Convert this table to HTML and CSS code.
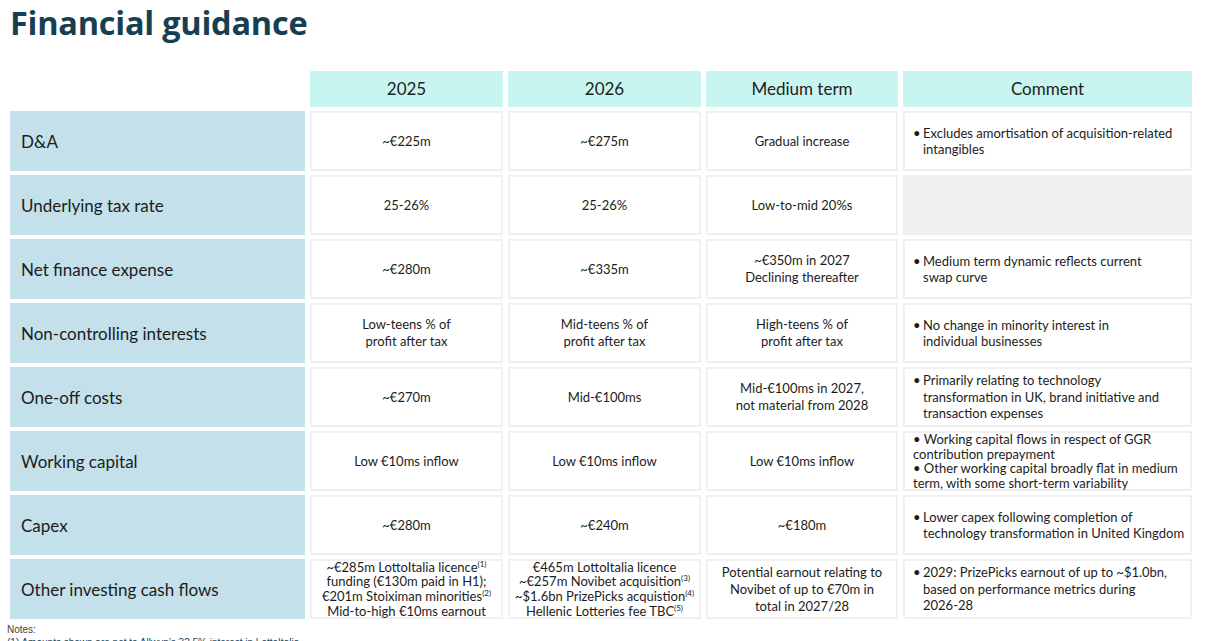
FILE: index.html
```html
<!DOCTYPE html>
<html lang="en">
<head>
<meta charset="utf-8">
<title>Financial guidance</title>
<link rel="stylesheet" href="styles.css">
</head>
<body>
<div class="page">
  <h1 class="title">Financial guidance</h1>
  <div class="grid">
    <div class="corner"></div>
    <div class="head">2025</div>
    <div class="head">2026</div>
    <div class="head">Medium term</div>
    <div class="head">Comment</div>

    <div class="label">D&amp;A</div>
    <div class="cell"><div class="txt">~€225m</div></div>
    <div class="cell"><div class="txt">~€275m</div></div>
    <div class="cell"><div class="txt">Gradual increase</div></div>
    <div class="cell comment"><div class="bul"><span class="dot">•</span><span>Excludes amortisation of acquisition-related<br>intangibles</span></div></div>

    <div class="label">Underlying tax rate</div>
    <div class="cell"><div class="txt">25-26%</div></div>
    <div class="cell"><div class="txt">25-26%</div></div>
    <div class="cell"><div class="txt">Low-to-mid 20%s</div></div>
    <div class="cell empty"></div>

    <div class="label">Net finance expense</div>
    <div class="cell"><div class="txt">~€280m</div></div>
    <div class="cell"><div class="txt">~€335m</div></div>
    <div class="cell"><div class="txt">~€350m in 2027<br>Declining thereafter</div></div>
    <div class="cell comment"><div class="bul"><span class="dot">•</span><span>Medium term dynamic reflects current<br>swap curve</span></div></div>

    <div class="label">Non-controlling interests</div>
    <div class="cell"><div class="txt">Low-teens % of<br>profit after tax</div></div>
    <div class="cell"><div class="txt">Mid-teens % of<br>profit after tax</div></div>
    <div class="cell"><div class="txt">High-teens % of<br>profit after tax</div></div>
    <div class="cell comment"><div class="bul"><span class="dot">•</span><span>No change in minority interest in<br>individual businesses</span></div></div>

    <div class="label">One-off costs</div>
    <div class="cell"><div class="txt">~€270m</div></div>
    <div class="cell"><div class="txt">Mid-€100ms</div></div>
    <div class="cell"><div class="txt">Mid-€100ms in 2027,<br>not material from 2028</div></div>
    <div class="cell comment"><div class="bul"><span class="dot">•</span><span>Primarily relating to technology<br>transformation in UK, brand initiative and<br>transaction expenses</span></div></div>

    <div class="label">Working capital</div>
    <div class="cell"><div class="txt">Low €10ms inflow</div></div>
    <div class="cell"><div class="txt">Low €10ms inflow</div></div>
    <div class="cell"><div class="txt">Low €10ms inflow</div></div>
    <div class="cell comment flat"><div class="txt">• Working capital flows in respect of GGR<br>contribution prepayment<br>• Other working capital broadly flat in medium<br>term, with some short-term variability</div></div>

    <div class="label">Capex</div>
    <div class="cell"><div class="txt">~€280m</div></div>
    <div class="cell"><div class="txt">~€240m</div></div>
    <div class="cell"><div class="txt">~€180m</div></div>
    <div class="cell comment"><div class="bul"><span class="dot">•</span><span>Lower capex following completion of<br>technology transformation in United Kingdom</span></div></div>

    <div class="label">Other investing cash flows</div>
    <div class="cell tight"><div class="txt">~€285m LottoItalia licence<sup>(1)</sup><br>funding (€130m paid in H1);<br>€201m Stoiximan minorities<sup>(2)</sup><br>Mid-to-high €10ms earnout</div></div>
    <div class="cell tight"><div class="txt">€465m LottoItalia licence<br>~€257m Novibet acquisition<sup>(3)</sup><br>~$1.6bn PrizePicks acquistion<sup>(4)</sup><br>Hellenic Lotteries fee TBC<sup>(5)</sup></div></div>
    <div class="cell"><div class="txt">Potential earnout relating to<br>Novibet of up to €70m in<br>total in 2027/28</div></div>
    <div class="cell comment"><div class="bul"><span class="dot">•</span><span>2029: PrizePicks earnout of up to ~$1.0bn,<br>based on performance metrics during<br>2026-28</span></div></div>
  </div>
  <div class="notes">
    <p>Notes:</p>
    <p class="note-item">(1) Amounts shown are net to Allwyn’s 32.5% interest in LottoItalia</p>
  </div>
</div>
</body>
</html>
```

FILE: styles.css
```css
html, body {
  margin: 0;
  padding: 0;
  background: #ffffff;
  overflow: hidden;
}
body {
  font-family: Lato, "Open Sans", Arial, sans-serif;
  color: #1c1c1c;
}
.page {
  width: 1214px;
  height: 641px;
  padding: 0 0 0 10px;
  box-sizing: border-box;
}
.title {
  margin: 0;
  padding-top: 3px;
  font-family: "Open Sans", Lato, Arial, sans-serif;
  font-size: 32.5px;
  line-height: 40px;
  font-weight: 700;
  color: #173f51;
  letter-spacing: -0.25px;
}
.grid {
  margin-top: 28px;
  display: grid;
  grid-template-columns: 295px 193px 193px 192px 289px;
  grid-template-rows: 36px repeat(8, 60px);
  column-gap: 5px;
  row-gap: 4px;
}
.head {
  background: #c8f5ef;
  display: flex;
  align-items: center;
  justify-content: center;
  padding-bottom: 2px;
  font-size: 17px;
  color: #222;
}
.label {
  background: #c4e0ea;
  display: flex;
  align-items: center;
  padding-left: 11px;
  font-size: 17px;
  color: #1c1c1c;
}
.cell {
  border: 2px solid #f0f0f0;
  box-sizing: border-box;
  display: flex;
  align-items: center;
  justify-content: center;
  text-align: center;
  font-size: 13px;
  line-height: 17px;
  white-space: nowrap;
}
.cell.tight {
  line-height: 14.7px;
}
.cell sup {
  font-size: 8px;
  line-height: 0;
  vertical-align: 5px;
}
.cell.empty {
  background: #f0f0f0;
}
.comment {
  justify-content: flex-start;
  text-align: left;
  padding: 0 4px 0 8px;
  line-height: 16.5px;
}
.bul {
  display: flex;
}
.dot {
  flex: none;
  width: 10px;
}
.comment.flat {
  line-height: 14.5px;
}
.notes {
  margin-top: 4px;
  font-family: "Liberation Sans", Arial, sans-serif;
  font-size: 10px;
  line-height: 13px;
  color: #404040;
}
.notes p {
  margin: 0 0 0 -3px;
}
.notes .note-item {
  color: #16445a;
}
```
